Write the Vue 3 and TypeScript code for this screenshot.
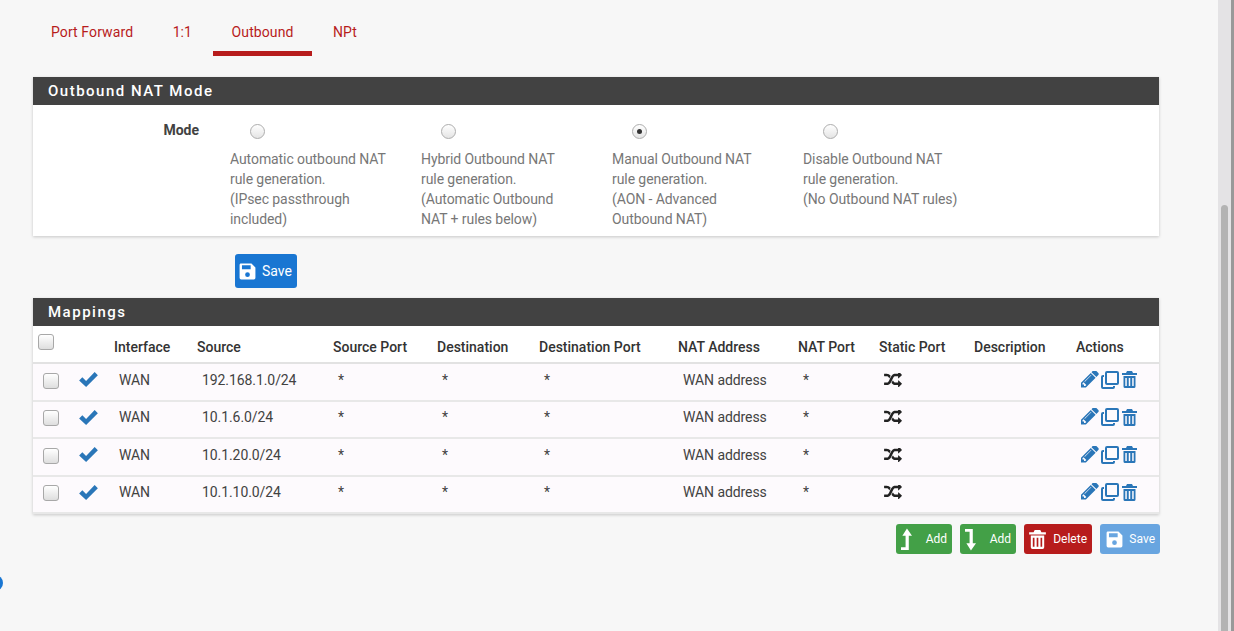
<script setup lang="ts">
const tabs = [
  { label: 'Port Forward', active: false },
  { label: '1:1', active: false },
  { label: 'Outbound', active: true },
  { label: 'NPt', active: false }
]

const modes = [
  { lines: ['Automatic outbound NAT', 'rule generation.', '(IPsec passthrough', 'included)'], checked: false },
  { lines: ['Hybrid Outbound NAT', 'rule generation.', '(Automatic Outbound', 'NAT + rules below)'], checked: false },
  { lines: ['Manual Outbound NAT', 'rule generation.', '(AON - Advanced', 'Outbound NAT)'], checked: true },
  { lines: ['Disable Outbound NAT', 'rule generation.', '(No Outbound NAT rules)'], checked: false }
]

const columns = ['Interface', 'Source', 'Source Port', 'Destination', 'Destination Port', 'NAT Address', 'NAT Port', 'Static Port', 'Description', 'Actions']
const widths = [40, 41, 83, 136, 104, 102, 139, 120, 81, 95, 102, 83]
const sources = ['192.168.1.0/24', '10.1.6.0/24', '10.1.20.0/24', '10.1.10.0/24']

const icons = {
  check: 'M0 8 3 5l3.500 3.500L14.500 0l3 3L6.500 14z',
  random: 'M666 481q-60 92-137 273-22-45-37-72.5t-40.5-63.5-51-56.5-63-35-81.5-14.5h-224q-14 0-23-9t-9-23v-192q0-14 9-23t23-9h224q250 0 410 225zm1126 799q0 14-9 23l-320 320q-9 9-23 9-13 0-22.5-9.5t-9.5-22.5v-192q-32 0-85 .5t-81 1-73-1-71-5-64-10.5-63-18.5-58-28.5-59-40-55-53.5-56-69.5q59-93 136-273 22 45 37 72.5t40.5 63.5 51 56.5 63 35 81.5 14.5h256v-192q0-14 9-23t23-9q12 0 24 10l319 319q9 9 9 23zm0-896q0 14-9 23l-320 320q-9 9-23 9-13 0-22.5-9.5t-9.5-22.5v-192h-256q-48 0-87 15t-69 45-51 61.5-45 77.5q-32 62-78 171-29 66-49.5 111t-54 105-64 100-74 83-90 68.5-106.5 42-128 16.5h-224q-14 0-23-9t-9-23v-192q0-14 9-23t23-9h224q48 0 87-15t69-45 51-61.5 45-77.5q32-62 78-171 29-66 49.5-111t54-105 64-100 74-83 90-68.5 106.5-42 128-16.5h256v-192q0-14 9-23t23-9q12 0 24 10l319 319q9 9 9 23z',
  pencil: 'M491 1536l91-91-235-235-91 91v107h128v128h107zm523-928q0-22-22-22-10 0-17 7l-542 542q-7 7-7 17 0 22 22 22 10 0 17-7l542-542q7-7 7-17zm-54-192l416 416-832 832h-416v-416zm683 96q0 53-37 90l-166 166-416-416 166-165q36-38 90-38 53 0 91 38l235 234q37 39 37 91z',
  clone: 'M6 0h10a2 2 0 0 1 2 2v10a2 2 0 0 1-2 2H6a2 2 0 0 1-2-2V2a2 2 0 0 1 2-2zm0 2v10h10V2zM3 4v2H2v10h10v-1h2v1a2 2 0 0 1-2 2H2a2 2 0 0 1-2-2V6a2 2 0 0 1 2-2z',
  trash: 'M5 0h5l1 2h4v2H0V2h4zM1.500 5h12v10.500a1.500 1.500 0 0 1-1.500 1.500H3a1.500 1.500 0 0 1-1.500-1.500zM3.300 7v8h1.500V7zm3.450 0v8h1.500V7zm3.450 0v8h1.500V7z',
  save: 'M3 2h14l5 5v13a2 2 0 0 1-2 2H4a2 2 0 0 1-2-2V4a2 2 0 0 1 1-2zm2 2v5h11V4zm7 9a3 3 0 1 0 0 6 3 3 0 0 0 0-6z'
}
</script>

<template>
  <div class="page">
    <main class="content">
      <nav class="tabs">
        <a v-for="tab in tabs" :key="tab.label" class="tab" :class="{ active: tab.active }">{{ tab.label }}</a>
      </nav>

      <section class="panel">
        <h2 class="panel-title">Outbound NAT Mode</h2>
        <div class="mode-body">
          <div class="mode-label">Mode</div>
          <div class="mode-options">
            <label v-for="(mode, i) in modes" :key="i" class="mode-option">
              <span class="radio" :class="{ on: mode.checked }"></span>
              <span class="mode-text">
                <span v-for="line in mode.lines" :key="line">{{ line }}</span>
              </span>
            </label>
          </div>
        </div>
      </section>

      <div class="save-row">
        <button class="btn btn-save">
          <svg class="save-icon" viewBox="0 0 24 24"><path fill-rule="evenodd" :d="icons.save" /></svg>
          Save
        </button>
      </div>

      <section class="panel">
        <h2 class="panel-title">Mappings</h2>
        <table class="rules">
          <colgroup>
            <col v-for="(w, i) in widths" :key="i" :style="{ width: w + 'px' }" />
          </colgroup>
          <thead>
            <tr>
              <th class="head-check"><span class="checkbox"></span></th>
              <th></th>
              <th v-for="col in columns" :key="col">{{ col }}</th>
            </tr>
          </thead>
          <tbody>
            <tr v-for="source in sources" :key="source">
              <td class="row-check"><span class="checkbox"></span></td>
              <td class="icon-cell">
                <svg class="ico-check" viewBox="0 0 17.500 14"><path :d="icons.check" /></svg>
              </td>
              <td>WAN</td>
              <td>{{ source }}</td>
              <td>*</td>
              <td>*</td>
              <td>*</td>
              <td>WAN address</td>
              <td>*</td>
              <td class="icon-cell">
                <svg class="ico-random" viewBox="0 192 1792 1408"><path :d="icons.random" /></svg>
              </td>
              <td></td>
              <td class="actions">
                <svg class="ico-pencil" viewBox="128 256 1536 1536"><path :d="icons.pencil" /></svg>
                <svg class="ico-clone" viewBox="0 0 18 18"><path fill-rule="evenodd" :d="icons.clone" /></svg>
                <svg class="ico-trash" viewBox="0 0 15 17"><path fill-rule="evenodd" :d="icons.trash" /></svg>
              </td>
            </tr>
          </tbody>
        </table>
      </section>

      <div class="table-buttons">
        <button class="btn btn-small green">
          <svg class="ico-level" viewBox="0 0 12 24"><path d="M6.500 0 12 8H8.500v15.500H0v-3h5V8H1.500z" /></svg>
          <span>Add</span>
        </button>
        <button class="btn btn-small green">
          <svg class="ico-level" viewBox="0 0 12 24"><path d="M0 .5h8.500V16H12l-5.500 8L1.500 16H5V3.500H0z" /></svg>
          <span>Add</span>
        </button>
        <button class="btn btn-small red">
          <svg class="ico-bin" viewBox="0 0 15 17"><path fill-rule="evenodd" :d="icons.trash" /></svg>
          <span>Delete</span>
        </button>
        <button class="btn btn-small faded">
          <svg class="ico-disk" viewBox="0 0 24 24"><path fill-rule="evenodd" :d="icons.save" /></svg>
          <span>Save</span>
        </button>
      </div>
    </main>

    <div class="scroll-track"><div class="scroll-thumb"></div></div>
    <div class="window-edge"></div>
    <span class="help-dot"></span>
  </div>
</template>

<style>
html,
body {
  margin: 0;
  overflow: hidden;
}
</style>

<style scoped>
.page {
  position: relative;
  display: flex;
  width: 1234px;
  height: 631px;
  overflow: hidden;
  background: #f7f7f7;
  font-family: Roboto, "Liberation Sans", sans-serif;
  font-size: 14px;
  color: #424242;
}

.content {
  flex: 1;
  padding: 8px 59px 0 33px;
  min-width: 0;
}

.tabs {
  display: flex;
  gap: 2.500px;
  height: 48px;
  margin-left: -0.500px;
}

.tab {
  padding: 16px 18.500px 0;
  line-height: 17px;
  letter-spacing: 0.100px;
  color: #b71c1c;
  box-sizing: border-box;
  height: 48px;
}

.tab.active {
  border-bottom: 5px solid #b71c1c;
}

.panel {
  background: #fff;
  box-shadow: 0 1px 3px rgba(0, 0, 0, 0.2);
}

.tabs + .panel {
  margin-top: 21px;
}

.panel-title {
  margin: 0;
  height: 28px;
  padding-left: 15px;
  background: #424242;
  color: #fff;
  font-size: 15px;
  font-weight: 500;
  line-height: 28px;
  letter-spacing: 1.500px;
}

.mode-body {
  display: flex;
  height: 131px;
}

.mode-label {
  width: 166px;
  padding-top: 17px;
  text-align: right;
  font-weight: 700;
  line-height: 17px;
}

.mode-options {
  display: flex;
  margin-left: 31px;
}

.mode-option {
  display: flex;
  flex-direction: column;
  width: 191px;
}

.radio {
  box-sizing: border-box;
  width: 15px;
  height: 15px;
  margin: 19px 0 10px 20px;
  border: 1px solid #adadad;
  border-radius: 50%;
  background: linear-gradient(#fff, #e4e4e4);
  position: relative;
}

.radio.on::after {
  content: "";
  position: absolute;
  left: 4px;
  top: 4px;
  width: 5px;
  height: 5px;
  border-radius: 50%;
  background: #333;
}

.mode-text {
  display: flex;
  flex-direction: column;
  line-height: 20px;
  letter-spacing: -0.080px;
  color: #777;
  white-space: nowrap;
}

.save-row {
  padding: 18px 0 10px 202px;
}

.btn {
  border: 0;
  border-radius: 3px;
  color: #fff;
  font-family: inherit;
  display: flex;
  align-items: center;
}

.btn-save {
  width: 62px;
  height: 34px;
  padding: 0 0 0 3px;
  gap: 5px;
  background: #1976d2;
  font-size: 14px;
}

.save-icon {
  width: 19px;
  height: 19px;
  fill: #fff;
}

.rules {
  width: 1126px;
  table-layout: fixed;
  border-collapse: collapse;
  background: #fff;
}

.rules th {
  height: 37px;
  padding: 5px 0 0;
  border-bottom: 2px solid #e2e2e2;
  box-sizing: border-box;
  text-align: left;
  font-weight: 500;
  color: #333;
}

.rules td {
  height: 37.500px;
  box-sizing: border-box;
  padding: 0 0 4px 5px;
  border-bottom: 2px solid #e8e8e8;
  background: #fdfafd;
  color: #424242;
  letter-spacing: -0.080px;
}

.rules th.head-check {
  padding: 0 0 5px 5px;
}

.rules td.row-check {
  padding: 0 0 2px 10px;
}

.checkbox {
  display: block;
  box-sizing: border-box;
  width: 16px;
  height: 16px;
  border: 1px solid #a8a8a8;
  border-radius: 3px;
  background: linear-gradient(#fff, #dedede);
}

.ico-check {
  display: block;
  width: 19px;
  height: 15px;
  margin-left: 1px;
  fill: #2a76b8;
}

.ico-random {
  display: block;
  width: 18px;
  height: 14px;
  fill: #222;
}

.actions {
  white-space: nowrap;
}

.actions svg {
  display: inline-block;
  fill: #2a76b8;
  vertical-align: middle;
}

.ico-pencil {
  width: 18px;
  height: 18px;
}

.ico-clone {
  width: 18px;
  height: 18px;
  margin-left: 2px;
}

.ico-trash {
  width: 15px;
  height: 17px;
  margin-left: 3px;
}

.table-buttons {
  display: flex;
  justify-content: flex-end;
  gap: 8px;
  margin-top: 10px;
  margin-right: -1px;
}

.btn-small {
  height: 30px;
  font-size: 12px;
  padding: 0 5px;
  justify-content: space-between;
}

.green {
  width: 56px;
  background: #43a047;
}

.red {
  width: 68px;
  background: #b71c1c;
}

.faded {
  width: 60px;
  background: #68a5e0;
}

.ico-level {
  width: 11px;
  height: 23px;
  fill: #fff;
}

.ico-bin {
  width: 17px;
  height: 19px;
  fill: #fff;
}

.ico-disk {
  width: 19px;
  height: 19px;
  fill: #fff;
}

.scroll-track {
  position: relative;
  flex: none;
  width: 13px;
  background: #e4e3e5;
}

.scroll-thumb {
  position: absolute;
  left: 3px;
  right: 3px;
  top: 205px;
  bottom: 0;
  border-radius: 4px 4px 0 0;
  background: #b3b3b3;
}

.window-edge {
  flex: none;
  width: 3px;
  background: #999;
}

.help-dot {
  position: absolute;
  left: -13px;
  top: 575px;
  width: 16px;
  height: 16px;
  border-radius: 50%;
  background: #1976d2;
}
</style>
